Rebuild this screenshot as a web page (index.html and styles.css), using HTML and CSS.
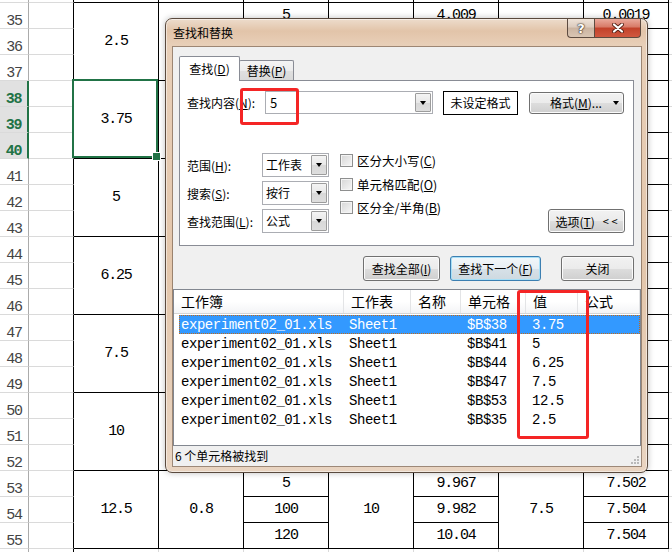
FILE: index.html
```html
<!DOCTYPE html>
<html>
<head>
<meta charset="utf-8">
<link rel="stylesheet" href="styles.css">
</head>
<body>
<div class="sheet">
  <div class="hd"></div><div class="ca"></div><div class="c"></div><div class="c"></div><div class="c"></div><div class="c"></div><div class="c"></div><div class="c"></div><div class="c"></div><div class="ci"></div>

  <div class="hd">35</div><div class="ca"></div><div class="c m3">2.5</div><div class="c m3"></div><div class="c">5</div><div class="c m3"></div><div class="c">4.009</div><div class="c m3"></div><div class="c">0.0019</div><div class="ci"></div>
  <div class="hd">36</div><div class="ca"></div><div class="c"></div><div class="c"></div><div class="c"></div><div class="ci"></div>
  <div class="hd">37</div><div class="ca"></div><div class="c"></div><div class="c"></div><div class="c"></div><div class="ci"></div>

  <div class="hd hs">38</div><div class="ca"></div><div class="c m3 sel">3.75</div><div class="c m3"></div><div class="c"></div><div class="c m3"></div><div class="c"></div><div class="c m3"></div><div class="c"></div><div class="ci"></div>
  <div class="hd hs">39</div><div class="ca"></div><div class="c"></div><div class="c"></div><div class="c"></div><div class="ci"></div>
  <div class="hd hs">40</div><div class="ca"></div><div class="c"></div><div class="c"></div><div class="c"></div><div class="ci"></div>

  <div class="hd">41</div><div class="ca"></div><div class="c m3">5</div><div class="c m3"></div><div class="c"></div><div class="c m3"></div><div class="c"></div><div class="c m3"></div><div class="c"></div><div class="ci"></div>
  <div class="hd">42</div><div class="ca"></div><div class="c"></div><div class="c"></div><div class="c"></div><div class="ci"></div>
  <div class="hd">43</div><div class="ca"></div><div class="c"></div><div class="c"></div><div class="c"></div><div class="ci"></div>

  <div class="hd">44</div><div class="ca"></div><div class="c m3">6.25</div><div class="c m3"></div><div class="c"></div><div class="c m3"></div><div class="c"></div><div class="c m3"></div><div class="c"></div><div class="ci"></div>
  <div class="hd">45</div><div class="ca"></div><div class="c"></div><div class="c"></div><div class="c"></div><div class="ci"></div>
  <div class="hd">46</div><div class="ca"></div><div class="c"></div><div class="c"></div><div class="c"></div><div class="ci"></div>

  <div class="hd">47</div><div class="ca"></div><div class="c m3">7.5</div><div class="c m3"></div><div class="c"></div><div class="c m3"></div><div class="c"></div><div class="c m3"></div><div class="c"></div><div class="ci"></div>
  <div class="hd">48</div><div class="ca"></div><div class="c"></div><div class="c"></div><div class="c"></div><div class="ci"></div>
  <div class="hd">49</div><div class="ca"></div><div class="c"></div><div class="c"></div><div class="c"></div><div class="ci"></div>

  <div class="hd">50</div><div class="ca"></div><div class="c m3">10</div><div class="c m3"></div><div class="c"></div><div class="c m3"></div><div class="c"></div><div class="c m3"></div><div class="c"></div><div class="ci"></div>
  <div class="hd">51</div><div class="ca"></div><div class="c"></div><div class="c"></div><div class="c"></div><div class="ci"></div>
  <div class="hd">52</div><div class="ca"></div><div class="c"></div><div class="c"></div><div class="c"></div><div class="ci"></div>

  <div class="hd">53</div><div class="ca"></div><div class="c m3">12.5</div><div class="c m3">0.8</div><div class="c">5</div><div class="c m3">10</div><div class="c">9.967</div><div class="c m3">7.5</div><div class="c">7.502</div><div class="ci"></div>
  <div class="hd">54</div><div class="ca"></div><div class="c">100</div><div class="c">9.982</div><div class="c">7.504</div><div class="ci"></div>
  <div class="hd">55</div><div class="ca"></div><div class="c">120</div><div class="c">10.04</div><div class="c">7.504</div><div class="ci"></div>

  <div class="hd"></div><div class="ca"></div><div class="cl"></div><div class="cl"></div><div class="cl"></div><div class="cl"></div><div class="cl"></div><div class="cl"></div><div class="cl"></div><div class="ci"></div>
</div>

<div class="dlg">
  <div class="titlebar">
    <span class="title">查找和替换</span>
    <div class="caps">
      <span class="cap help">?</span>
      <span class="cap close"><svg width="12" height="10" viewBox="0 0 12 10"><path d="M2 1.5L10 8.5M10 1.5L2 8.5" stroke="#5a2418" stroke-width="4" stroke-linecap="round"/><path d="M2 1.5L10 8.5M10 1.5L2 8.5" stroke="#fff" stroke-width="2.2" stroke-linecap="round"/></svg></span>
    </div>
  </div>
  <div class="client">
    <div class="tabs">
      <span class="tab on"><span>查找(<u>D</u>)</span></span>
      <span class="tab off"><span>替换(<u>P</u>)</span></span>
    </div>
    <div class="panel">
      <div class="row1">
        <span class="lbl lbl1">查找内容(<u>N</u>):</span>
        <div class="combo wide"><span class="v">5</span><span class="drop"></span></div>
        <span class="fmtbox">未设定格式</span>
        <span class="btn fmtbtn"><span>格式(<u>M</u>)...</span><i class="tri"></i></span>
      </div>
      <div class="opts">
        <div class="selcol">
          <span class="lbl">范围(<u>H</u>):</span>
          <div class="combo sel2"><span class="v">工作表</span><span class="drop"></span></div>
          <span class="lbl">搜索(<u>S</u>):</span>
          <div class="combo sel2"><span class="v">按行</span><span class="drop"></span></div>
          <span class="lbl">查找范围(<u>L</u>):</span>
          <div class="combo sel2"><span class="v">公式</span><span class="drop"></span></div>
        </div>
        <div class="checks">
          <div class="chk"><span class="box"></span><span>区分大小写(<u>C</u>)</span></div>
          <div class="chk"><span class="box"></span><span>单元格匹配(<u>O</u>)</span></div>
          <div class="chk"><span class="box"></span><span>区分全/半角(<u>B</u>)</span></div>
        </div>
        <span class="btn optbtn"><span>选项(<u>T</u>)</span><span class="lt">&lt; &lt;</span></span>
      </div>
    </div>
    <div class="actions">
      <span class="btn b1"><span>查找全部(<u>I</u>)</span></span>
      <span class="btn b2 focus"><span>查找下一个(<u>F</u>)</span></span>
      <span class="btn b3">关闭</span>
    </div>
    <div class="results">
      <div class="lhead">
        <span class="h1">工作簿</span><span class="h2">工作表</span><span class="h3">名称</span><span class="h4">单元格</span><span class="h5">值</span><span class="h6">公式</span>
      </div>
      <div class="lbody">
        <div class="lrow on"><span class="r1">experiment02_01.xls</span><span class="r2">Sheet1</span><span class="r3"></span><span class="r4">$B$38</span><span class="r5">3.75</span></div>
        <div class="lrow"><span class="r1">experiment02_01.xls</span><span class="r2">Sheet1</span><span class="r3"></span><span class="r4">$B$41</span><span class="r5">5</span></div>
        <div class="lrow"><span class="r1">experiment02_01.xls</span><span class="r2">Sheet1</span><span class="r3"></span><span class="r4">$B$44</span><span class="r5">6.25</span></div>
        <div class="lrow"><span class="r1">experiment02_01.xls</span><span class="r2">Sheet1</span><span class="r3"></span><span class="r4">$B$47</span><span class="r5">7.5</span></div>
        <div class="lrow"><span class="r1">experiment02_01.xls</span><span class="r2">Sheet1</span><span class="r3"></span><span class="r4">$B$53</span><span class="r5">12.5</span></div>
        <div class="lrow"><span class="r1">experiment02_01.xls</span><span class="r2">Sheet1</span><span class="r3"></span><span class="r4">$B$35</span><span class="r5">2.5</span></div>
      </div>
    </div>
    <div class="status">6 个单元格被找到
      <svg class="grip" width="9" height="9" viewBox="0 0 9 9"><g fill="#b9b9b9"><rect x="7" y="1" width="2" height="2"/><rect x="4" y="4" width="2" height="2"/><rect x="7" y="4" width="2" height="2"/><rect x="1" y="7" width="2" height="2"/><rect x="4" y="7" width="2" height="2"/><rect x="7" y="7" width="2" height="2"/></g></svg>
    </div>
  </div>
  <div class="mark m1"></div>
  <div class="mark m2"></div>
</div>
</body>
</html>
```
FILE: styles.css
```css
* { box-sizing: border-box; }
html, body { margin: 0; padding: 0; }
body { width: 672px; height: 552px; overflow: hidden; background: #fff; position: relative; }

/* ---------- spreadsheet ---------- */
.sheet {
  display: grid;
  grid-template-columns: 29px 45px repeat(7, 85px) 3px;
  grid-auto-rows: 26px;
  margin-top: -23px;
  font-family: "Liberation Mono", monospace;
  font-size: 15px;
  letter-spacing: -1.2px;
  color: #000;
}
.sheet > div { display: flex; align-items: center; justify-content: center; white-space: nowrap; }
.sheet > .hd { border-right: 1px solid #ababab; border-bottom: 1px solid #dadada; align-items: flex-end; color: #444; line-height: 12px; }
.sheet > .hs { background: #e1e1e1; color: #217346; font-weight: bold; border-right: 2px solid #217346; }
.ca { border-right: 1px solid #000; border-bottom: 1px solid #dadada; }
.c { border-right: 1px solid #000; border-bottom: 1px solid #000; }
.cl { border-right: 1px solid #dadada; }
.ci { border-bottom: 1px solid #dadada; }
.m3 { grid-row: span 3; }
.sel { position: relative; }
.sel::before { content: ""; position: absolute; left: -2px; top: -2px; right: 0; bottom: 0; border: 2px solid #217346; }
.sel::after { content: ""; position: absolute; right: -3px; bottom: -3px; width: 7px; height: 7px; background: #217346; border: 1px solid #fff; }

/* ---------- dialog ---------- */
.dlg {
  position: absolute; left: 165px; top: 18px; width: 483px; height: 455px;
  border: 1px solid #5a4a3e; border-radius: 7px;
  padding: 0 6px 6px 7px;
  background: linear-gradient(180deg, #eddccc 0, #e2c4a9 12px, #e8cfb8 26px, #e3c6ab 55%, #e9d4c1 100%);
  box-shadow: inset 0 0 0 1px rgba(255,255,255,.5), 0 0 6px rgba(0,0,0,.25);
  font-family: "Noto Sans CJK SC", "Noto Sans", sans-serif;
  color: #000;
}
.titlebar { height: 28px; display: flex; align-items: flex-start; }
.title { font-size: 12px; line-height: 28px; color: #000; }
.caps { margin-left: auto; display: flex; }
.cap { height: 19px; border: 1px solid #5d4b40; border-top: none; display: flex; align-items: center; justify-content: center; }
.help {
  width: 27px; border-right: none; border-radius: 0 0 0 4px;
  background: linear-gradient(#efe3d8, #dccbbd 45%, #cbb4a1 50%, #d9c5b3);
  font: bold 13px "DejaVu Sans", sans-serif; color: #fff; line-height: 17px;
  text-shadow: 0 0 1px #3a2e26, 0 0 1px #3a2e26, 0 0 2px #3a2e26;
}
.close {
  width: 47px; border-radius: 0 0 4px 0;
  background: linear-gradient(#eaa99b, #d77966 45%, #c2412a 50%, #d0583f);
}

.client {
  height: 419px; background: #f0f0f0;
  padding: 9px 7px 0 6px;
  display: flex; flex-direction: column;
  box-shadow: 0 0 0 1px rgba(95,75,60,.55);
}
.tabs { display: flex; align-items: flex-end; height: 24px; position: relative; z-index: 1; }
.tab { font-size: 12px; border: 1px solid #898c95; border-bottom: none; display: flex; align-items: center; justify-content: center; border-radius: 2px 2px 0 0; white-space: nowrap; }
.tab.on { width: 61px; height: 25px; margin-bottom: -1px; background: #fff; position: relative; z-index: 2; padding-bottom: 2px; }
.tab.off { width: 55px; height: 20px; margin-left: -1px; background: linear-gradient(#f4f4f4, #ececec 50%, #e0e0e0 51%, #d9d9d9); }

.panel { background: #fff; border: 1px solid #898c95; padding: 10px 8px 12px 7px; }
.row1 { display: flex; align-items: center; height: 23px; }
.lbl { font-size: 12px; white-space: nowrap; }
.lbl1 { width: 78px; }
.combo { height: 23px; border: 1px solid #abadb3; background: #fff; display: flex; font-size: 12px; line-height: 21px; }
.combo .v { flex: 1; padding-left: 3px; white-space: nowrap; overflow: hidden; }
.combo .drop {
  width: 16px; margin: 1px; border: 1px solid #9c9c9c; border-radius: 1px;
  background: linear-gradient(#f4f4f4, #e8e8e8 50%, #d8d8d8 51%, #dedede);
  display: flex; align-items: center; justify-content: center;
}
.combo .drop::after, .tri {
  content: ""; display: block; width: 0; height: 0;
  border-left: 3.5px solid transparent; border-right: 3.5px solid transparent; border-top: 4px solid #000;
}
.wide { width: 168px; }
.wide .v { font-size: 13px; padding-left: 4px; }
.fmtbox { margin-left: 10px; width: 75px; height: 24px; border: 1px solid #000; background: #fff; font-size: 12px; display: flex; align-items: center; justify-content: center; }

.btn {
  border: 1px solid #707070; border-radius: 3px;
  background: linear-gradient(#f2f2f2, #ebebeb 50%, #dddddd 51%, #cfcfcf);
  box-shadow: inset 0 0 0 1px #fbfbfb;
  font-size: 12px; display: flex; align-items: center; justify-content: center; white-space: nowrap;
}
.fmtbtn { margin-left: 11px; width: 95px; height: 22px; justify-content: flex-start; padding-left: 20px; }
.fmtbtn .tri { margin-left: auto; margin-right: 4px; }

.opts { display: flex; margin-top: 39px; height: 80px; }
.selcol { display: grid; grid-template-columns: 75px 67px; grid-auto-rows: 24px; row-gap: 4px; align-items: center; }
.sel2 { width: 67px; height: 24px; line-height: 22px; }
.checks { margin-left: 11px; margin-top: -4px; display: flex; flex-direction: column; }
.chk { height: 23.5px; display: flex; align-items: center; gap: 4px; font-size: 12.5px; white-space: nowrap; }
.box { width: 13px; height: 13px; border: 1px solid #8e8f8f; background: linear-gradient(135deg, #d6d6d6, #f7f7f7); box-shadow: inset 0 0 0 1px #f4f4f4; }
.optbtn { margin-left: auto; align-self: flex-end; width: 77px; height: 24px; }
.optbtn .lt { font-size: 11px; margin-left: 8px; }

.actions { display: flex; justify-content: flex-end; margin-top: 10px; height: 25px; }
.actions .btn { height: 25px; }
.b1 { width: 77px; }
.b2 { width: 91px; margin-left: 10px; }
.b3 { width: 73px; margin-left: 20px; }
.btn.focus {
  border-color: #3c7fb1;
  box-shadow: inset 0 0 0 1px #a6dff7;
  background: linear-gradient(#f2f7fa, #e7eef3 50%, #d7e1e8 51%, #ced9e0);
}

.results { margin: 8px -7px 0 -6px; height: 157px; border: 1px solid #828790; background: #fff; }
.lhead { display: flex; height: 24px; border-bottom: 1px solid #d5d5d5; background: linear-gradient(#fff, #fff 50%, #f3f4f6); font-size: 14px; }
.lhead span { border-right: 1px solid #e3e4e6; padding-left: 7px; line-height: 22px; white-space: nowrap; }
.h1 { width: 170px; padding-left: 8px; }
.h2 { width: 67px; }
.h3 { width: 50px; }
.h4 { width: 65px; }
.h5 { width: 52px; }
.h6 { flex: 1; }
.lbody { padding: 1px 0 0 5px; font-family: "Liberation Mono", monospace; font-size: 14px; letter-spacing: -0.45px; }
.lrow { display: flex; height: 19px; width: 461px; align-items: center; white-space: nowrap; }
.lrow.on { background: #3399ff; color: #fff; outline: 1px dotted #c26a1a; outline-offset: -1px; }
.r1 { width: 165px; padding-left: 2px; }
.r2 { width: 67px; padding-left: 5px; }
.r3 { width: 50px; }
.r4 { width: 65px; padding-left: 6px; }
.r5 { width: 52px; padding-left: 6px; }

.status { margin: 0 -7px 0 -6px; height: 20px; font-size: 12px; line-height: 19px; padding-left: 2px; position: relative; background: #f0f0f0; }
.grip { position: absolute; right: 2px; bottom: 2px; }

.mark { position: absolute; border: 3px solid #f42525; border-radius: 3px; }
.m1 { left: 74px; top: 69px; width: 59px; height: 37px; }
.m2 { left: 351px; top: 271px; width: 72px; height: 149px; }
```
